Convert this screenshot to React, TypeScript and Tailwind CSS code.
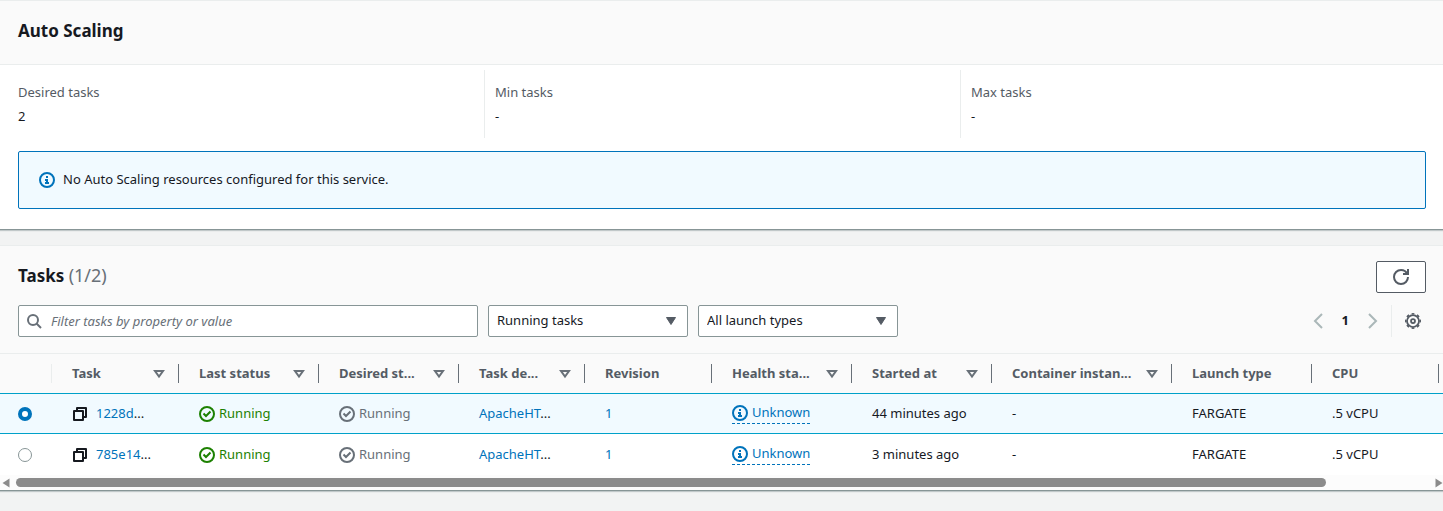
import { useState } from "react";
import type { ReactNode } from "react";

function InfoIcon() {
  return (
    <svg viewBox="0 0 16 16" className="size-4 shrink-0 fill-none stroke-current stroke-2" aria-hidden="true">
      <circle cx="8" cy="8" r="7" />
      <path d="M8 11.5V8H6M6 11h4M8 6V4" />
    </svg>
  );
}

function CheckIcon() {
  return (
    <svg viewBox="0 0 16 16" className="size-4 shrink-0 fill-none stroke-current stroke-2" aria-hidden="true">
      <circle cx="8" cy="8" r="7" />
      <path d="m4.5 7.5 2.5 2.5 4.5-4.5" />
    </svg>
  );
}

function CopyIcon() {
  return (
    <svg viewBox="0 0 16 16" className="block size-4 shrink-0 fill-none stroke-current stroke-2" aria-hidden="true">
      <path d="M2 5h9v9H2z" strokeLinejoin="round" />
      <path d="M5 5V2h9v9h-3" strokeLinejoin="round" />
    </svg>
  );
}

function SortIcon() {
  return (
    <svg viewBox="0 0 16 16" className="size-4 shrink-0 fill-none stroke-current stroke-2" aria-hidden="true">
      <path d="M4 5h8l-4 5.5z" />
    </svg>
  );
}

function RefreshIcon() {
  return (
    <svg viewBox="0 0 16 16" className="size-4 fill-none stroke-current stroke-2" aria-hidden="true">
      <path d="M15 8a7 7 0 1 1-7-7 6.9 6.9 0 0 1 6.3 4" />
      <path d="M10 5h5V0" />
    </svg>
  );
}

function GearIcon() {
  return (
    <svg viewBox="0 0 16 16" className="size-4 fill-none stroke-current" aria-hidden="true">
      <circle cx="8" cy="8" r="6" strokeWidth="1.75" />
      <circle cx="8" cy="8" r="7.25" strokeWidth="1.5" pathLength="16" strokeDasharray="1 1" strokeDashoffset="0.5" />
      <circle cx="8" cy="8" r="2" strokeWidth="1.75" />
    </svg>
  );
}

function Metric({ label, value, divided }: { label: string; value: string; divided?: boolean }) {
  return (
    <div className={divided ? "border-l border-[#eaeded] px-2.5 pt-[11px] pb-[11px]" : "px-2.5 pt-[11px] pb-[11px]"}>
      <dt className="leading-[22px] text-[#545b64]">{label}</dt>
      <dd className="mt-0.5 leading-[22px]">{value}</dd>
    </div>
  );
}

function FilterSelect({ label, options }: { label: string; options: string[] }) {
  return (
    <div className="relative w-[200px]">
      <select
        aria-label={label}
        className="h-8 w-full appearance-none rounded-xs border border-[#879596] bg-white pr-8 pl-2 text-[#16191f]"
      >
        {options.map((option) => (
          <option key={option}>{option}</option>
        ))}
      </select>
      <svg
        viewBox="0 0 16 16"
        className="pointer-events-none absolute top-2 right-[9px] size-4 fill-[#545b64] stroke-[#545b64]"
        strokeLinejoin="round"
        aria-hidden="true"
      >
        <path d="M3.5 4.5h9L8 11.5z" />
      </svg>
    </div>
  );
}

const columns = [
  { title: "Task", sortable: true, width: "w-[127px]" },
  { title: "Last status", sortable: true, width: "w-[140px]" },
  { title: "Desired st...", sortable: true, width: "w-[140px]" },
  { title: "Task de...", sortable: true, width: "w-[126px]" },
  { title: "Revision", sortable: false, width: "w-[127px]" },
  { title: "Health sta...", sortable: true, width: "w-[140px]" },
  { title: "Started at", sortable: true, width: "w-[140px]" },
  { title: "Container instan...", sortable: true, width: "w-[180px]" },
  { title: "Launch type", sortable: false, width: "w-[140px]" },
  { title: "CPU", sortable: false, width: "w-[127px]" },
];

const tasks = [
  { id: "1228d", started: "44 minutes ago" },
  { id: "785e14", started: "3 minutes ago" },
];

function Cell({ selected, children }: { selected: boolean; children?: ReactNode }) {
  return (
    <td
      className={
        selected
          ? "h-[41px] border-y border-[#00a1c9] bg-[#f1faff] pl-5 whitespace-nowrap"
          : "h-[41px] bg-white pl-5 whitespace-nowrap"
      }
    >
      {children}
    </td>
  );
}

export default function App() {
  const [selectedId, setSelectedId] = useState("1228d");

  return (
    <main className="min-h-screen bg-[#f2f3f3] font-['Noto_Sans',sans-serif] text-[13px] text-[#16191f]">
      <section className="border-t border-b border-t-[#eaeded] border-b-[#879596] bg-white shadow-[0_1px_1px_0_rgba(0,28,36,0.2)]">
        <header className="border-b border-[#eaeded] bg-[#fafafa] px-[18px] pt-[18px] pb-[21px]">
          <h2 className="text-[17px] leading-6 font-bold">Auto Scaling</h2>
        </header>
        <div className="pt-[5px] pr-[17px] pb-5 pl-[18px]">
          <dl className="-mx-2.5 grid grid-cols-3">
            <Metric label="Desired tasks" value="2" />
            <Metric label="Min tasks" value="-" divided />
            <Metric label="Max tasks" value="-" divided />
          </dl>
          <div
            role="status"
            className="mt-[13px] flex h-[58px] items-center gap-2 rounded-xs border border-[#0073bb] bg-[#f1faff] px-5 text-[#0073bb]"
          >
            <InfoIcon />
            <p className="text-[#16191f]">No Auto Scaling resources configured for this service.</p>
          </div>
        </div>
      </section>

      <section className="mt-[15px] border-t border-b border-t-[#eaeded] border-b-[#879596] bg-[#fafafa] shadow-[0_1px_1px_0_rgba(0,28,36,0.2)]">
        <header className="pt-[15px] pr-[17px] pb-4 pl-[18px]">
          <div className="flex items-center justify-between">
            <h2 className="mb-1 text-[17px] leading-6 font-bold">
              Tasks <span className="text-lg leading-6 font-normal text-[#687078]">(1/2)</span>
            </h2>
            <button
              type="button"
              aria-label="Refresh tasks"
              className="flex h-8 w-[50px] items-center justify-center rounded-xs border border-[#545b64] bg-white text-[#545b64]"
            >
              <RefreshIcon />
            </button>
          </div>
          <div className="mt-3 flex items-center justify-between">
            <div className="flex flex-1 gap-2.5">
              <div className="relative max-w-[460px] flex-1">
                <svg
                  viewBox="0 0 16 16"
                  className="absolute top-2 left-2 size-4 fill-none stroke-[#687078] stroke-2"
                  aria-hidden="true"
                >
                  <circle cx="7" cy="7" r="5" />
                  <path d="m15 15-4.5-4.5" />
                </svg>
                <input
                  type="text"
                  aria-label="Filter tasks"
                  placeholder="Filter tasks by property or value"
                  className="h-8 w-full rounded-xs border border-[#879596] bg-white pr-2 pl-8 placeholder:text-[#687078] placeholder:italic"
                />
              </div>
              <FilterSelect label="Task status" options={["Running tasks", "Stopped tasks"]} />
              <FilterSelect label="Launch type" options={["All launch types", "Fargate", "EC2"]} />
            </div>
            <div className="flex items-center">
              <nav aria-label="Pages" className="flex items-center gap-4">
                <button type="button" aria-label="Previous page" className="text-[#aab7b8]">
                  <svg viewBox="0 0 16 16" className="size-4 fill-none stroke-current stroke-2">
                    <path d="m12 1-7 7 7 7" />
                  </svg>
                </button>
                <button type="button" className="font-bold">
                  1
                </button>
                <button type="button" aria-label="Next page" className="text-[#aab7b8]">
                  <svg viewBox="0 0 16 16" className="size-4 fill-none stroke-current stroke-2">
                    <path d="m4 1 7 7-7 7" />
                  </svg>
                </button>
              </nav>
              <button
                type="button"
                aria-label="Preferences"
                className="ml-2.5 flex h-8 items-center border-l border-[#eaeded] pr-[5px] pl-[13px] text-[#545b64]"
              >
                <GearIcon />
              </button>
            </div>
          </div>
        </header>

        <div className="overflow-hidden border-t border-[#eaeded]">
          <table className="w-full min-w-[1554px] table-fixed border-separate border-spacing-0 text-left">
            <thead className="text-[#545b64]">
              <tr>
                <th className="h-[39px] w-[52px]">
                  <div className="h-[19px] border-r border-[#eaeded]" />
                </th>
                {columns.map((column) => (
                  <th key={column.title} scope="col" className={column.width}>
                    <div className="flex h-[19px] items-center justify-between border-r border-[#687078] pr-[11px] pl-5 whitespace-nowrap">
                      {column.title}
                      {column.sortable && (
                        <button type="button" aria-label={`Sort by ${column.title}`} className="text-[#687078]">
                          <SortIcon />
                        </button>
                      )}
                    </div>
                  </th>
                ))}
                <th />
              </tr>
            </thead>
            <tbody>
              {tasks.map((task) => {
                const selected = task.id === selectedId;
                return (
                  <tr key={task.id}>
                    <td
                      className={
                        selected
                          ? "h-[41px] border-y border-[#00a1c9] bg-[#f1faff] pl-[18px]"
                          : "h-[41px] bg-white pl-[18px]"
                      }
                    >
                      <input
                        type="radio"
                        name="task"
                        aria-label={`Select task ${task.id}`}
                        checked={selected}
                        onChange={() => setSelectedId(task.id)}
                        className="block size-3.5 appearance-none rounded-full border border-[#879596] bg-white checked:border-4 checked:border-[#0073bb]"
                      />
                    </td>
                    <Cell selected={selected}>
                      <div className="flex items-center gap-2">
                        <button type="button" aria-label="Copy task ID">
                          <CopyIcon />
                        </button>
                        <span>
                          <a href="#task" className="text-[#0073bb]">
                            {task.id}
                          </a>
                          ...
                        </span>
                      </div>
                    </Cell>
                    <Cell selected={selected}>
                      <div className="flex items-center gap-1 text-[#1d8102]">
                        <CheckIcon />
                        Running
                      </div>
                    </Cell>
                    <Cell selected={selected}>
                      <div className="flex items-center gap-1 text-[#687078]">
                        <CheckIcon />
                        Running
                      </div>
                    </Cell>
                    <Cell selected={selected}>
                      <a href="#definition" className="text-[#0073bb]">
                        ApacheHT
                      </a>
                      ...
                    </Cell>
                    <Cell selected={selected}>
                      <a href="#revision" className="text-[#0073bb]">
                        1
                      </a>
                    </Cell>
                    <Cell selected={selected}>
                      <button
                        type="button"
                        className="flex items-center gap-1 border-b border-dashed border-[#0073bb] pb-px text-[#0073bb]"
                      >
                        <InfoIcon />
                        Unknown
                      </button>
                    </Cell>
                    <Cell selected={selected}>{task.started}</Cell>
                    <Cell selected={selected}>-</Cell>
                    <Cell selected={selected}>FARGATE</Cell>
                    <Cell selected={selected}>.5 vCPU</Cell>
                    <Cell selected={selected} />
                  </tr>
                );
              })}
            </tbody>
          </table>
          <div className="flex h-[15px] items-center justify-between bg-[#fcfcfc] pl-0.5 text-[#8b8b8b]">
            <svg viewBox="0 0 8 10" className="h-2.5 w-2 fill-current" aria-hidden="true">
              <path d="M7.5 0.5v9L0.5 5z" />
            </svg>
            <div className="mx-1.5 flex-1">
              <div className="h-[9px] w-11/12 rounded-full bg-[#8b8b8b] min-[1400px]:w-[1310px]" />
            </div>
            <svg viewBox="0 0 8 10" className="h-2.5 w-2 fill-current" aria-hidden="true">
              <path d="M0.5 0.5v9L7.5 5z" />
            </svg>
          </div>
        </div>
      </section>
    </main>
  );
}
